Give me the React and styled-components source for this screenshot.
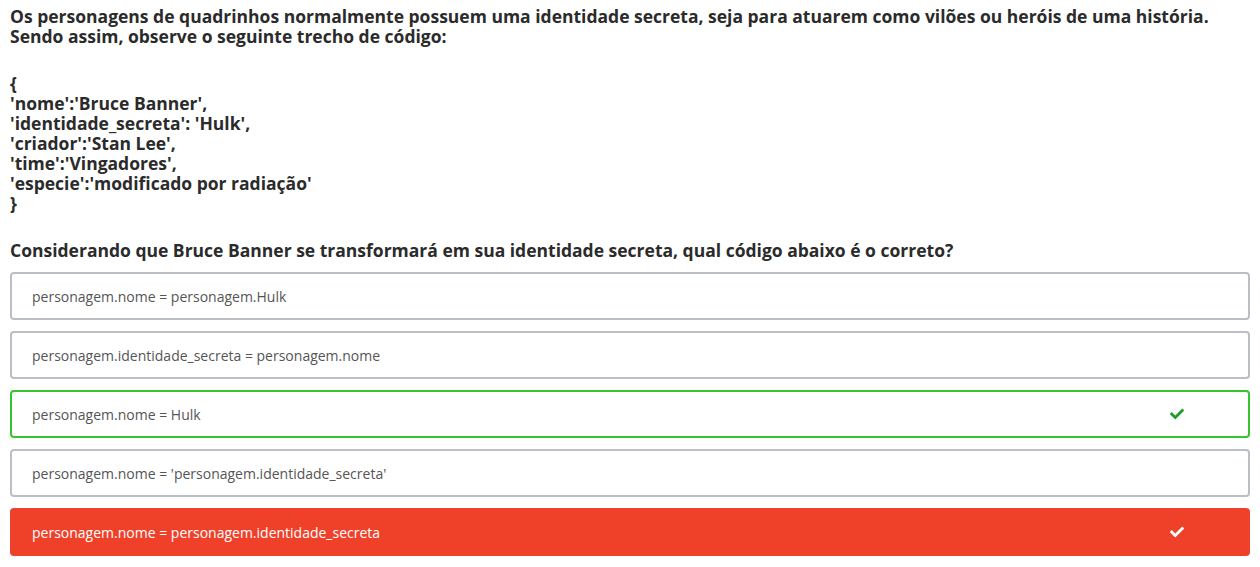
import React from 'react';
import styled, { createGlobalStyle } from 'styled-components';
import { FaCheck } from 'react-icons/fa';

const GlobalStyle = createGlobalStyle`
  html, body {
    margin: 0;
    padding: 0;
    background: #fff;
  }
  body {
    font-family: 'Open Sans', 'Noto Sans', sans-serif;
  }
`;

const code = [
  '{',
  "'nome':'Bruce Banner',",
  "'identidade_secreta': 'Hulk',",
  "'criador':'Stan Lee',",
  "'time':'Vingadores',",
  "'especie':'modificado por radiação'",
  '}',
];

const options = [
  { text: 'personagem.nome = personagem.Hulk' },
  { text: 'personagem.identidade_secreta = personagem.nome' },
  { text: 'personagem.nome = Hulk', state: 'correct' },
  { text: "personagem.nome = 'personagem.identidade_secreta'" },
  { text: 'personagem.nome = personagem.identidade_secreta', state: 'wrong' },
];

const App = () => {
  return (
    <>
      <GlobalStyle />
      <Question>
        <Statement>
          <p>
            Os personagens de quadrinhos normalmente possuem uma identidade secreta, seja para
            atuarem como vilões ou heróis de uma história.
            <br />
            Sendo assim, observe o seguinte trecho de código:
          </p>
          <p>
            {code.map((line, i) => (
              <React.Fragment key={i}>
                {line}
                <br />
              </React.Fragment>
            ))}
          </p>
          <p>
            Considerando que Bruce Banner se transformará em sua identidade secreta, qual código
            abaixo é o correto?
          </p>
        </Statement>
        <OptionList>
          {options.map((opt) => (
            <Option key={opt.text} $state={opt.state}>
              <span>{opt.text}</span>
              {opt.state && (
                <CheckMark $state={opt.state}>
                  <FaCheck />
                </CheckMark>
              )}
            </Option>
          ))}
        </OptionList>
      </Question>
    </>
  );
};

export default App;

const Question = styled.div`
  padding: 6px 10px 8px;
`;

const Statement = styled.div`
  font-size: 17.5px;
  font-weight: 700;
  line-height: 20px;
  color: #2b2b2b;

  p {
    margin: 0 0 27px;
  }

  p:last-child {
    margin-bottom: 12px;
  }
`;

const OptionList = styled.div`
  display: flex;
  flex-direction: column;
  gap: 11px;
`;

const borderColor = {
  correct: '#36c52f',
  wrong: '#ef4129',
};

const Option = styled.div`
  display: flex;
  align-items: center;
  justify-content: space-between;
  box-sizing: border-box;
  height: 48px;
  padding: 0 64px 0 20px;
  border: 2px solid ${({ $state }) => borderColor[$state] || '#b9bfc4'};
  border-radius: 4px;
  background: ${({ $state }) => ($state === 'wrong' ? '#ef4129' : '#fff')};
  color: ${({ $state }) => ($state === 'wrong' ? '#fff' : '#555')};
  font-size: 14px;
  font-weight: 400;
`;

const CheckMark = styled.span`
  display: flex;
  font-size: 14px;
  color: ${({ $state }) => ($state === 'wrong' ? '#fff' : '#1e9d2a')};
`;
